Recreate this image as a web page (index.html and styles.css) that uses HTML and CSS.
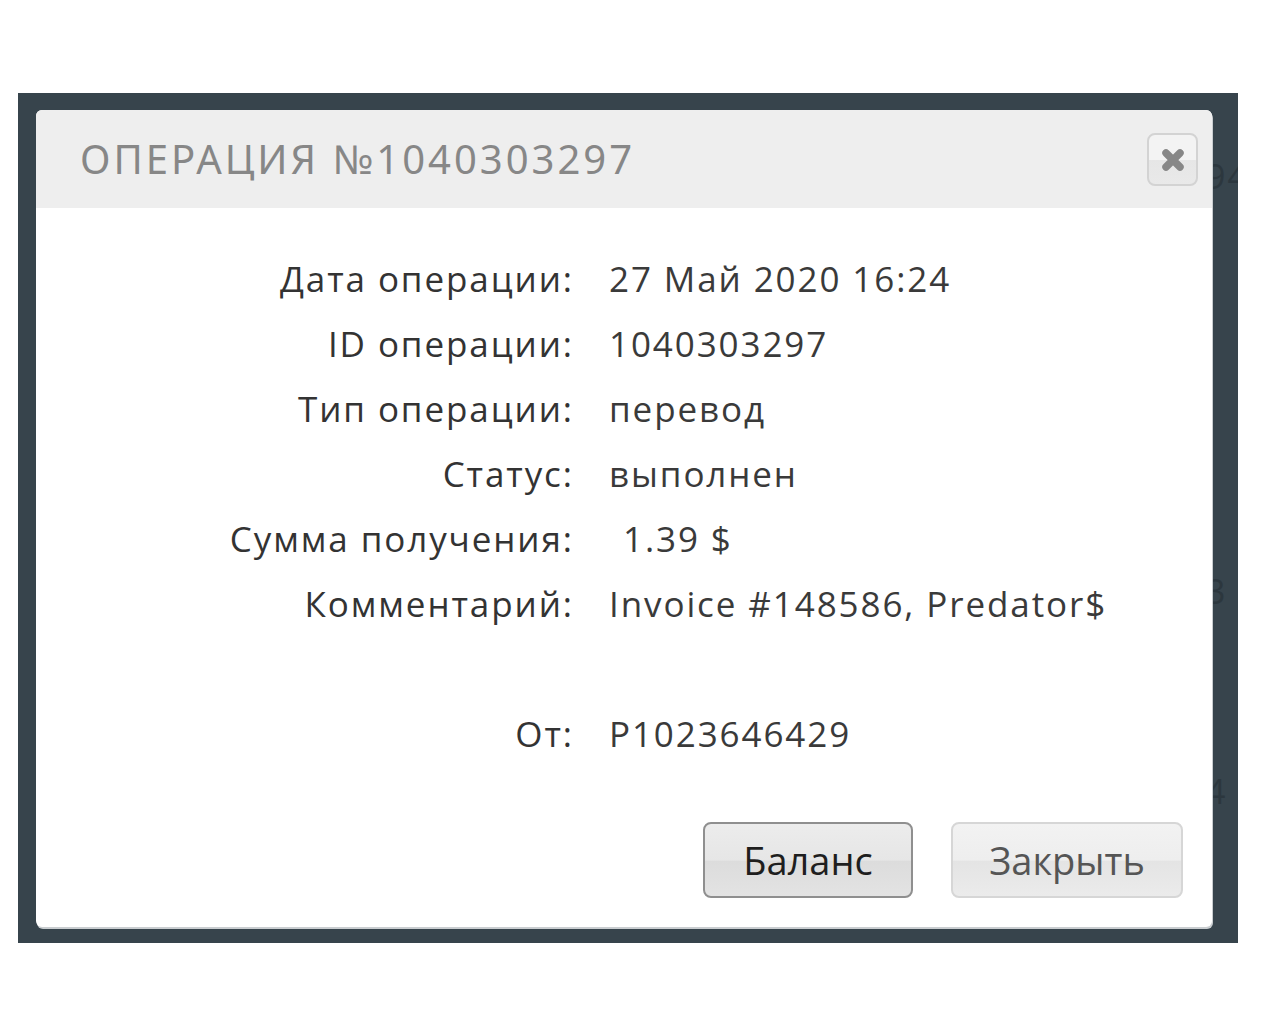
FILE: index.html
```html
<!DOCTYPE html>
<html lang="ru">
	<head>
		<meta charset="utf-8">
		<title>Операция №1040303297</title>
		<link rel="stylesheet" href="styles.css">
	</head>
	<body>
		<div id="fundo">
			<span class="atras atras1">94</span>
			<span class="atras atras2">3</span>
			<span class="atras atras3">4</span>

			<div id="janela">
				<div class="cabecalho">
					<h1>Операция №1040303297</h1>
					<button class="fechar" title="Закрыть">
						<svg width="30" height="30" viewBox="0 0 30 30">
							<path d="M8 8 L22 22 M22 8 L8 22" stroke="#878787" stroke-width="7.5" stroke-linecap="round"/>
						</svg>
					</button>
				</div>

				<div class="corpo">
					<div class="linha"><span class="rotulo">Дата операции:</span><span class="valor">27 Май 2020 16:24</span></div>
					<div class="linha"><span class="rotulo">ID операции:</span><span class="valor">1040303297</span></div>
					<div class="linha"><span class="rotulo">Тип операции:</span><span class="valor">перевод</span></div>
					<div class="linha"><span class="rotulo">Статус:</span><span class="valor">выполнен</span></div>
					<div class="linha"><span class="rotulo">Сумма получения:</span><span class="valor soma">1.39 $</span></div>
					<div class="linha"><span class="rotulo">Комментарий:</span><span class="valor">Invoice #148586, Predator$</span></div>
					<div class="linha vazia"></div>
					<div class="linha"><span class="rotulo">От:</span><span class="valor">P1023646429</span></div>
				</div>

				<div class="botoes">
					<button class="botao ativo">Баланс</button>
					<button class="botao">Закрыть</button>
				</div>
			</div>
		</div>
	</body>
</html>
```

FILE: styles.css
```css
* {
	margin: 0;
	padding: 0;
	box-sizing: border-box;
}

body {
	background: #ffffff;
	padding: 93px 0 0 18px;
}

#fundo {
	position: relative;
	width: 1220px;
	height: 850px;
	background: #37444c;
	padding: 17px 26px 16px 18px;
	overflow: hidden;
}

	.atras {
		position: absolute;
		left: 1188px;
		font-family: "Open Sans", sans-serif;
		font-size: 34px;
		letter-spacing: 2px;
		color: #2c373e;
	}

	.atras1 { top: 60px; }
	.atras2 { top: 475px; }
	.atras3 { top: 675px; }

#janela {
	position: relative;
	height: 817px;
	background: #ffffff;
	border-radius: 6px;
	box-shadow: 1px 2px 0 #c9cdd0;
	display: flex;
	flex-direction: column;
	overflow: hidden;
}

	.cabecalho {
		height: 98px;
		background: #eeeeee;
		display: flex;
		align-items: center;
		justify-content: space-between;
		padding: 0 14px 0 44px;
	}

		.cabecalho h1 {
			font-family: "Noto Sans", sans-serif;
			font-weight: normal;
			font-size: 40px;
			letter-spacing: 3px;
			text-transform: uppercase;
			color: #878787;
			padding-bottom: 2px;
		}

		.fechar {
			width: 51px;
			height: 53px;
			margin-top: 1px;
			border: 2px solid #d3d3d3;
			border-radius: 8px;
			background: linear-gradient(#f3f3f3 0%, #f3f3f3 50%, #e6e6e6 51%, #e9e9e9 100%);
			display: flex;
			align-items: center;
			justify-content: center;
		}

	.corpo {
		padding-top: 38px;
		display: flex;
		flex-direction: column;
	}

		.linha {
			height: 65px;
			display: grid;
			grid-template-columns: 536px 1fr;
			column-gap: 37px;
			align-items: center;
			font-family: "Open Sans", sans-serif;
			font-size: 35px;
			letter-spacing: 1.9px;
			color: #333333;
		}

		.rotulo {
			text-align: right;
			margin-right: -1.9px;
		}

		.valor {
			color: #3a3a3a;
		}

		.soma {
			padding-left: 14px;
		}

	.botoes {
		margin-top: auto;
		padding: 0 29px 29px 0;
		display: flex;
		justify-content: flex-end;
		gap: 38px;
	}

		.botao {
			width: 232px;
			height: 76px;
			border: 2px solid #d6d6d6;
			border-radius: 8px;
			background: linear-gradient(#f2f2f2 0%, #eeeeee 50%, #e4e4e4 52%, #ebebeb 100%);
			font-family: "Open Sans", sans-serif;
			font-size: 38px;
			color: #555555;
		}

		.ativo {
			width: 210px;
			border-color: #8f8f8f;
			color: #1e1e1e;
			background: linear-gradient(#ececec 0%, #e6e6e6 50%, #dcdcdc 52%, #e3e3e3 100%);
		}
```
